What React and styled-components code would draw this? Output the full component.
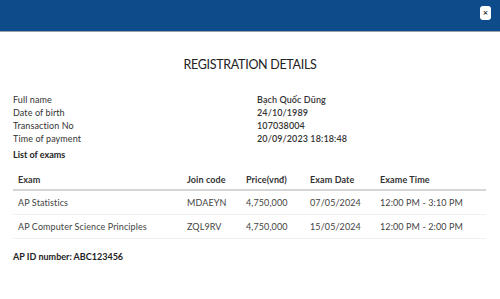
import styled, { createGlobalStyle } from "styled-components";

const GlobalStyle = createGlobalStyle`
    * { box-sizing: border-box; }
    body {
        margin: 0;
        background: #fff;
        font-family: "Lato", "Noto Sans", sans-serif;
        color: #333;
    }
`;

const info = [
    ['Full name', 'Bạch Quốc Dũng'],
    ['Date of birth', '24/10/1989'],
    ['Transaction No', '107038004'],
    ['Time of payment', '20/09/2023 18:18:48'],
];

const exams = [
    { name: 'AP Statistics', code: 'MDAEYN', price: '4,750,000', date: '07/05/2024', time: '12:00 PM - 3:10 PM' },
    { name: 'AP Computer Science Principles', code: 'ZQL9RV', price: '4,750,000', date: '15/05/2024', time: '12:00 PM - 2:00 PM' },
];

const columns = ['Exam', 'Join code', 'Price(vnđ)', 'Exam Date', 'Exame Time'];

export default function App() {
    return (
        <>
            <GlobalStyle />
            <HeaderSC>
                <CloseButtonSC aria-label="close">×</CloseButtonSC>
            </HeaderSC>
            <BodySC>
                <TitleSC>REGISTRATION DETAILS</TitleSC>
                <InfoGridSC>
                    {info.map(([label, value]) => (
                        <InfoRowSC key={label}>
                            <span>{label}</span>
                            <ValueSC>{value}</ValueSC>
                        </InfoRowSC>
                    ))}
                </InfoGridSC>
                <SectionLabelSC>List of exams</SectionLabelSC>
                <TableSC>
                    <thead>
                        <tr>
                            {columns.map(col => <ThSC key={col}>{col}</ThSC>)}
                        </tr>
                    </thead>
                    <tbody>
                        {exams.map(exam => (
                            <tr key={exam.code}>
                                <TdSC>{exam.name}</TdSC>
                                <TdSC>{exam.code}</TdSC>
                                <TdSC>{exam.price}</TdSC>
                                <TdSC>{exam.date}</TdSC>
                                <TdSC>{exam.time}</TdSC>
                            </tr>
                        ))}
                    </tbody>
                </TableSC>
                <ApIdSC>AP ID number: ABC123456</ApIdSC>
            </BodySC>
        </>
    );
}

const HeaderSC = styled.header`
    height: 32px;
    background-color: #0d4b8a;
    border-bottom: 1px solid #9aa3ad;
    display: flex;
    justify-content: flex-end;
    align-items: flex-start;
    padding: 6px 9px 0 0;
`;

const CloseButtonSC = styled.button`
    width: 11px;
    height: 14px;
    padding: 0;
    border: none;
    border-radius: 3px;
    background: #fff;
    color: #333;
    font-size: 7px;
    line-height: 14px;
    font-weight: 700;
    font-family: "DejaVu Sans", sans-serif;
`;

const BodySC = styled.main`
    padding: 0 13px;
`;

const TitleSC = styled.h1`
    margin: 25px 0 21px;
    text-align: center;
    font-size: 12.5px;
    font-weight: 400;
    letter-spacing: -0.3px;
    color: #222;
`;

const InfoGridSC = styled.div`
    display: flex;
    flex-direction: column;
`;

const InfoRowSC = styled.div`
    display: grid;
    grid-template-columns: 244px 1fr;
    font-size: 9px;
    line-height: 13px;
    color: #333;
    letter-spacing: 0.1px;
`;

const ValueSC = styled.span`
    font-weight: 600;
    color: #333;
`;

const SectionLabelSC = styled.div`
    margin-top: 3px;
    font-size: 9px;
    line-height: 13px;
    font-weight: 700;
    color: #222;
`;

const TableSC = styled.table`
    width: 473px;
    margin-top: 9px;
    border-collapse: collapse;
    font-size: 9px;
    color: #444;
    letter-spacing: 0.1px;
`;

const ThSC = styled.th`
    text-align: left;
    font-weight: 700;
    color: #333;
    padding: 0 5px;
    height: 20px;
    border-bottom: 2px solid #d5d5d5;
    &:nth-child(1) { width: 169px; }
    &:nth-child(2) { width: 59px; }
    &:nth-child(3) { width: 64px; }
    &:nth-child(4) { width: 70px; }
`;

const TdSC = styled.td`
    padding: 0 5px;
    height: 24px;
    border-bottom: 1px solid #f0f0f0;
`;

const ApIdSC = styled.div`
    margin-top: 12px;
    font-size: 9px;
    font-weight: 700;
    color: #222;
`;
